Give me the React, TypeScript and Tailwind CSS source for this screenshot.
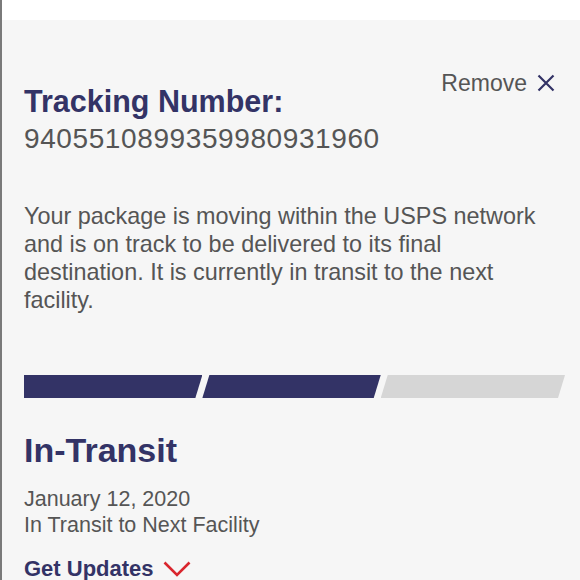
const font = { fontFamily: '"Liberation Sans", Arial, Helvetica, sans-serif' };

export default function App() {
  return (
    <div
      className="w-[580px] h-[580px] overflow-hidden bg-white border-l-2 border-[#7a7a7a]"
      style={font}
    >
      <div className="h-[20px] bg-white" />
      <div className="bg-[#f6f6f6] h-[560px] pl-[22px] pr-[15px]">
        {/* header */}
        <div className="flex justify-end pt-[50px] pr-[10px]">
          <button className="flex items-center gap-[10px] text-[23px] leading-[26px] text-[#555]">
            Remove
            <svg width="18" height="18" viewBox="0 0 18 18" fill="none">
              <path d="M1.5 1.5 L16.5 16.5 M16.5 1.5 L1.5 16.5" stroke="#333366" strokeWidth="2.2" />
            </svg>
          </button>
        </div>
        <h1 className="mt-[-13px] text-[30.5px] leading-[36px] font-bold text-[#333366]">
          Tracking Number:
        </h1>
        <div className="mt-[4px] text-[28px] leading-[32px] tracking-[0.6px] text-[#555]">
          9405510899359980931960
        </div>

        <p className="mt-[47px] text-[23.4px] leading-[28px] text-[#555] pr-[10px]">
          Your package is moving within the USPS network and is on track to be
          delivered to its final destination. It is currently in transit to the
          next facility.
        </p>

        {/* progress */}
        <div className="mt-[61px] flex h-[23px] gap-[4px]">
          <div className="w-[180px] bg-[#333366] [clip-path:polygon(0_0,100%_0,calc(100%-7px)_100%,0_100%)]" />
          <div className="w-[180px] -ml-[4px] bg-[#333366] [clip-path:polygon(7px_0,100%_0,calc(100%-7px)_100%,0_100%)]" />
          <div className="w-[186px] -ml-[4px] bg-[#d6d6d6] [clip-path:polygon(7px_0,100%_0,calc(100%-7px)_100%,0_100%)]" />
        </div>

        <h2 className="mt-[32px] text-[34px] leading-[40px] font-bold text-[#333366]">
          In-Transit
        </h2>
        <div className="mt-[16px] text-[21.5px] leading-[26px] text-[#555]">
          <div>January 12, 2020</div>
          <div>In Transit to Next Facility</div>
        </div>
        <button className="mt-[18px] flex items-center gap-[9px] text-[22px] leading-[26px] font-bold text-[#333366]">
          Get Updates
          <svg width="28" height="16" viewBox="0 0 28 16" fill="none">
            <path d="M1.5 1.5 L14 14 L26.5 1.5" stroke="#d9262e" strokeWidth="2.6" />
          </svg>
        </button>
      </div>
    </div>
  );
}
